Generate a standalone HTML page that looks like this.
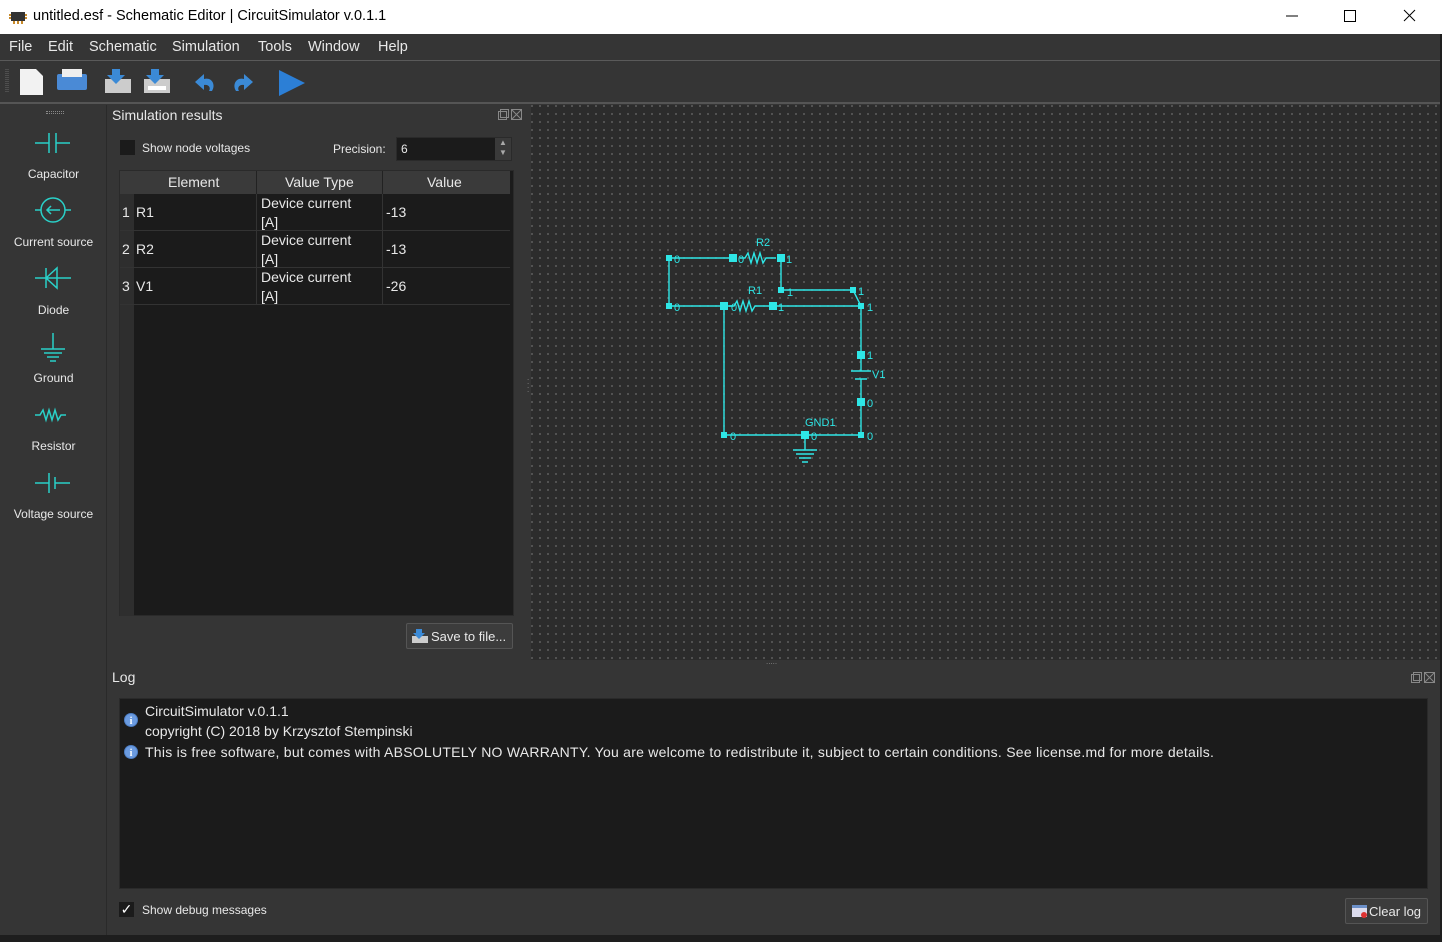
<!DOCTYPE html>
<html><head><meta charset="utf-8"><style>
*{margin:0;padding:0;box-sizing:border-box}
body{width:1442px;height:942px;overflow:hidden;background:#353535;font-family:"Segoe UI","Liberation Sans",sans-serif;color:#e8e8e8;position:relative;font-size:13px}
.abs{position:absolute}
#title{left:0;top:0;width:1442px;height:34px;background:#fff;color:#000;font-size:14px}
#menu{left:0;top:34px;width:1442px;height:27px;background:#353535;border-bottom:1px solid #5a5a5a;font-size:14px}
#menu span{position:absolute;top:5px}
#tb{left:0;top:61px;width:1442px;height:43px;background:#353535;border-bottom:2px solid #555}
#left{left:0;top:105px;width:107px;height:830px;background:#353535;border-right:1px solid #2a2a2a}
.ti{position:absolute;left:0;width:107px;text-align:center;font-size:12px}
#canvas{left:531px;top:105px;width:909px;height:555px;background-color:#2c2c2c;background-image:radial-gradient(circle at 1px 1px,#5e5e5e 0.8px,transparent 1px);background-size:8px 8px}
.dark{background:#1b1b1b}
#bottom{left:0;top:935px;width:1442px;height:7px;background:#1e1e1e}
</style></head><body>
<div id="title" class="abs">
<svg class="abs" style="left:9px;top:9px" width="18" height="16"><rect x="2" y="3" width="14" height="9" fill="#333"/><path d="M2 6h-2M2 9h-2M16 6h2M16 9h2M5 12v3M9 12v3M13 12v3" stroke="#c88a2a" stroke-width="2"/></svg>
<span class="abs" style="left:33px;top:8px;font-size:14.5px">untitled.esf - Schematic Editor | CircuitSimulator v.0.1.1</span>
<svg class="abs" style="left:1280px;top:8px" width="150" height="18"><path d="M6 8h12" stroke="#000"/><rect x="64.5" y="2.5" width="11" height="11" fill="none" stroke="#000"/><path d="M124 2l11 11M135 2l-11 11" stroke="#000"/></svg>
</div>
<div id="menu" class="abs" style="font-size:14.5px"><span style="left:9px">File</span><span style="left:48px">Edit</span><span style="left:89px">Schematic</span><span style="left:172px">Simulation</span><span style="left:258px">Tools</span><span style="left:308px">Window</span><span style="left:378px">Help</span></div>
<div id="tb" class="abs">
<svg width="320" height="43">
<path d="M6 8v24M8 8v24" stroke="#666" stroke-dasharray="1 1"/>
<path d="M20 8h16l7 7v19h-23z" fill="#f2f2f2"/>
<rect x="57" y="13" width="30" height="16" rx="2" fill="#4a8ad6"/><rect x="62" y="8" width="20" height="8" fill="#eee"/>
<rect x="105" y="18" width="26" height="14" fill="#ccc"/><path d="M112 8l8 0 0 6 5 0-9 9-9-9 5 0z" fill="#3b8ad6"/>
<rect x="144" y="18" width="26" height="14" fill="#ccc"/><rect x="148" y="25" width="18" height="4" fill="#fff"/><path d="M151 8l8 0 0 6 5 0-9 9-9-9 5 0z" fill="#3b8ad6"/>
<path d="M212 30c4-6 0-14-8-12l0-5-9 8 9 8 0-5c5-1 7 3 5 6z" fill="#3b8ad6"/>
<path d="M236 30c-4-6 0-14 8-12l0-5 9 8-9 8 0-5c-5-1-7 3-5 6z" fill="#3b8ad6"/>
<path d="M279 9l26 13-26 13z" fill="#2c7fd6"/>
</svg></div>

<div id="left" class="abs">
<div class="abs" style="left:46px;top:6px;width:18px;height:3px;border-top:1px dotted #888;border-bottom:1px dotted #888"></div>
<svg class="abs" style="left:0;top:0" width="107" height="400" stroke="#2ad0c8" stroke-width="1.5" fill="none">
<path d="M35 38h14M49 28v20M56 28v20M56 38h14"/>
<circle cx="53" cy="105" r="12"/><path d="M35 105h6M65 105h6M60 105h-13M51 101l-4 4 4 4"/>
<path d="M35 173h36M46 163v20M46 173l11-10v20z"/>
<path d="M53 228v16M41 244h24M44 248h18M47 252h12M50 256h6"/>
<path d="M35 310h5l3-5 3 10 3-10 3 10 3-10 3 10 3-5h5"/>
<path d="M35 378h14M49 368v20M55 372v12M55 378h15"/>
</svg>
<div class="ti" style="top:62px">Capacitor</div>
<div class="ti" style="top:130px">Current source</div>
<div class="ti" style="top:198px">Diode</div>
<div class="ti" style="top:266px">Ground</div>
<div class="ti" style="top:334px">Resistor</div>
<div class="ti" style="top:402px">Voltage source</div>
</div>

<span class="abs" style="left:112px;top:107px;font-size:14px">Simulation results</span>
<svg class="abs" style="left:497px;top:108px" width="28" height="13" stroke="#888" fill="none"><rect x="1.5" y="3.5" width="8" height="8"/><rect x="3.5" y="1.5" width="8" height="8"/><rect x="14.5" y="1.5" width="10" height="10"/><path d="M15 2l9 9M24 2l-9 9"/></svg>
<div class="abs" style="left:120px;top:140px;width:15px;height:15px;background:#1b1b1b"></div>
<span class="abs" style="left:142px;top:141px;font-size:12px">Show node voltages</span>
<span class="abs" style="left:333px;top:142px;font-size:12px">Precision:</span>
<div class="abs dark" style="left:396px;top:137px;width:116px;height:24px;border:1px solid #2a2a2a"><span class="abs" style="left:4px;top:4px;font-size:12px">6</span><div class="abs" style="right:0;top:0;width:16px;height:22px;background:#3a3a3a;color:#aaa;font-size:8px;text-align:center;line-height:10px">▲<br>▼</div></div>
<div class="abs" style="left:119px;top:170px;width:395px;height:446px;background:#1b1b1b;border:1px solid #2a2a2a">
<div class="abs" style="left:0;top:0;width:14px;height:445px;background:#2e2e2e"></div>
<div class="abs" style="left:0;top:0;width:390px;height:23px;background:#3a3a3a;font-size:14px">
<span class="abs" style="left:48px;top:3px">Element</span><span class="abs" style="left:165px;top:3px">Value Type</span><span class="abs" style="left:307px;top:3px">Value</span>
<div class="abs" style="left:136px;top:0;width:1px;height:23px;background:#222"></div><div class="abs" style="left:262px;top:0;width:1px;height:23px;background:#222"></div>
</div>
<div class="abs" style="left:0;top:23px;width:390px;font-size:14px">
<div class="abs" style="top:0;height:37px;width:390px;border-bottom:1px solid #333"><span class="abs" style="left:2px;top:10px">1</span><span class="abs" style="left:16px;top:10px">R1</span><span class="abs" style="left:141px;top:0;line-height:19px">Device current<br>[A]</span><span class="abs" style="left:266px;top:10px">-13</span></div>
<div class="abs" style="top:37px;height:37px;width:390px;border-bottom:1px solid #333"><span class="abs" style="left:2px;top:10px">2</span><span class="abs" style="left:16px;top:10px">R2</span><span class="abs" style="left:141px;top:0;line-height:19px">Device current<br>[A]</span><span class="abs" style="left:266px;top:10px">-13</span></div>
<div class="abs" style="top:74px;height:37px;width:390px;border-bottom:1px solid #333"><span class="abs" style="left:2px;top:10px">3</span><span class="abs" style="left:16px;top:10px">V1</span><span class="abs" style="left:141px;top:0;line-height:19px">Device current<br>[A]</span><span class="abs" style="left:266px;top:10px">-26</span></div>
<div class="abs" style="left:136px;top:0;width:1px;height:111px;background:#333"></div><div class="abs" style="left:262px;top:0;width:1px;height:111px;background:#333"></div>
</div></div>
<div class="abs" style="left:406px;top:623px;width:107px;height:26px;background:#3c3c3c;border:1px solid #555;border-radius:2px;font-size:13px"><svg class="abs" style="left:4px;top:4px" width="18" height="16"><rect x="1" y="8" width="16" height="7" fill="#ccc"/><path d="M5 1h6v4h3l-6 6-6-6h3z" fill="#3b8ad6"/></svg><span class="abs" style="left:24px;top:5px">Save to file...</span></div>

<div id="canvas" class="abs"></div>
<span class="abs" style="left:527px;top:376px;color:#888;font-size:8px;line-height:4px">.<br>.<br>.<br>.</span>
<span class="abs" style="left:766px;top:657px;color:#888;font-size:8px">.....</span>
<svg class="abs" style="left:0;top:0" width="1442" height="942" fill="#2ee6e6" stroke="#2ee6e6" font-family="Liberation Sans" font-size="11">
<g fill="none" stroke-width="1.4">
<path d="M669 258h64M669 258v48M669 306h64M781 258v32M781 290h72l8 16M765 306h96M724 306v129M861 306v65M851 371h20M855 379h12M861 379v56M724 435h137M805 435v15M793 450h24M796 454h18M799 458h12M802 462h6"/>
<path d="M740 258h5l3-5 3 10 3-10 3 10 3-10 3 10 3-5h10"/>
<path d="M729 306h5l3-5 3 10 3-10 3 10 3-10 3 10 3-5h10"/>
</g>
<g stroke="none">
<rect x="666" y="255" width="6" height="6"/><rect x="729" y="254" width="8" height="8"/><rect x="777" y="254" width="8" height="8"/>
<rect x="778" y="287" width="6" height="6"/><rect x="850" y="287" width="6" height="6"/>
<rect x="666" y="303" width="6" height="6"/><rect x="720" y="302" width="8" height="8"/><rect x="769" y="302" width="8" height="8"/><rect x="858" y="303" width="6" height="6"/>
<rect x="857" y="351" width="8" height="8"/><rect x="857" y="398" width="8" height="8"/>
<rect x="721" y="432" width="6" height="6"/><rect x="801" y="431" width="8" height="8"/><rect x="858" y="432" width="6" height="6"/>
<text x="756" y="246">R2</text><text x="748" y="294">R1</text><text x="872" y="378">V1</text><text x="805" y="426">GND1</text>
<text x="674" y="263">0</text><text x="738" y="263">0</text><text x="786" y="263">1</text>
<text x="787" y="296">1</text><text x="858" y="295">1</text>
<text x="674" y="311">0</text><text x="731" y="311">0</text><text x="778" y="311">1</text><text x="867" y="311">1</text>
<text x="867" y="359">1</text><text x="867" y="407">0</text>
<text x="730" y="440">0</text><text x="811" y="440">0</text><text x="867" y="440">0</text>
</g></svg>

<span class="abs" style="left:112px;top:669px;font-size:14px">Log</span>
<svg class="abs" style="left:1410px;top:671px" width="28" height="13" stroke="#888" fill="none"><rect x="1.5" y="3.5" width="8" height="8"/><rect x="3.5" y="1.5" width="8" height="8"/><rect x="14.5" y="1.5" width="10" height="10"/><path d="M15 2l9 9M24 2l-9 9"/></svg>
<div class="abs dark" style="left:119px;top:698px;width:1309px;height:191px;border:1px solid #2a2a2a;font-size:14px">
<svg class="abs" style="left:3px;top:13px" width="16" height="48"><circle cx="8" cy="8" r="7" fill="#4d7ec4"/><circle cx="8" cy="8" r="6" fill="#6b9be0"/><text x="8" y="12" font-size="10" font-weight="bold" fill="#fff" text-anchor="middle" font-family="Liberation Serif">i</text><circle cx="8" cy="40" r="7" fill="#4d7ec4"/><circle cx="8" cy="40" r="6" fill="#6b9be0"/><text x="8" y="44" font-size="10" font-weight="bold" fill="#fff" text-anchor="middle" font-family="Liberation Serif">i</text></svg>
<span class="abs" style="left:25px;top:2px;line-height:20px">CircuitSimulator v.0.1.1<br>copyright (C) 2018 by Krzysztof Stempinski</span>
<span class="abs" style="left:25px;top:45px;white-space:nowrap;letter-spacing:0.25px">This is free software, but comes with ABSOLUTELY NO WARRANTY. You are welcome to redistribute it, subject to certain conditions. See license.md for more details.</span>
</div>
<div class="abs" style="left:119px;top:902px;width:15px;height:15px;background:#1b1b1b;color:#fff;font-size:14px;line-height:15px;text-align:center">✓</div>
<span class="abs" style="left:142px;top:903px;font-size:12px">Show debug messages</span>
<div class="abs" style="left:1345px;top:898px;width:83px;height:26px;background:#3c3c3c;border:1px solid #555;border-radius:2px;font-size:13px"><svg class="abs" style="left:6px;top:5px" width="16" height="15"><rect x="0" y="1" width="15" height="12" fill="#dde"/><rect x="0" y="1" width="15" height="3" fill="#6b8fc8"/><circle cx="12" cy="11" r="3" fill="#d33"/></svg><span class="abs" style="left:23px;top:5px">Clear log</span></div>
<div class="abs" style="left:1440px;top:34px;width:2px;height:908px;background:#1e1e1e"></div>
<div id="bottom" class="abs"></div>
</body></html>
